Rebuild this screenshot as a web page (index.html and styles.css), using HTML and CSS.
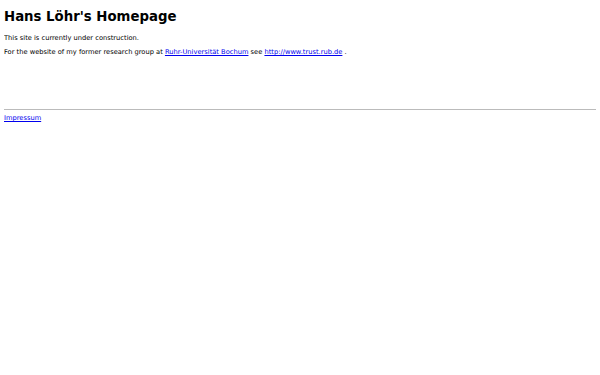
FILE: index.html
```html
<!DOCTYPE html>
<html lang="de">
  <head>
    <meta charset="UTF-8" />
    <title>Hans Löhr's Homepage</title>
    <link rel="stylesheet" href="styles.css">
  </head>
  <body>
    <h1>Hans Löhr's Homepage</h1>

    <p>This site is currently under construction.</p>
    <p>For the website of my former research group at <a href="http://www.rub.de">Ruhr-Universität Bochum</a> see <a href="http://www.trust.rub.de">http://www.trust.rub.de</a> .</p>

    <div class="spacer"></div>

    <hr>
    <p class="footer"><a href="impressum.html">Impressum</a></p>
  </body>
</html>
```

FILE: styles.css
```css
body {
  font-family: "DejaVu Sans", sans-serif;
  font-size: 6.7px;
  margin: 4px;
  color: #000;
  background-color: #fff;
}

h1 {
  font-size: 13.3px;
  margin: 5px 0 10px;
}

p {
  margin: 0 0 6px;
}

a {
  color: #0000ee;
}

.spacer {
  height: 47px;
}

hr {
  border: none;
  border-top: 1px solid #bbb;
  margin: 0 0 4px;
}
```
